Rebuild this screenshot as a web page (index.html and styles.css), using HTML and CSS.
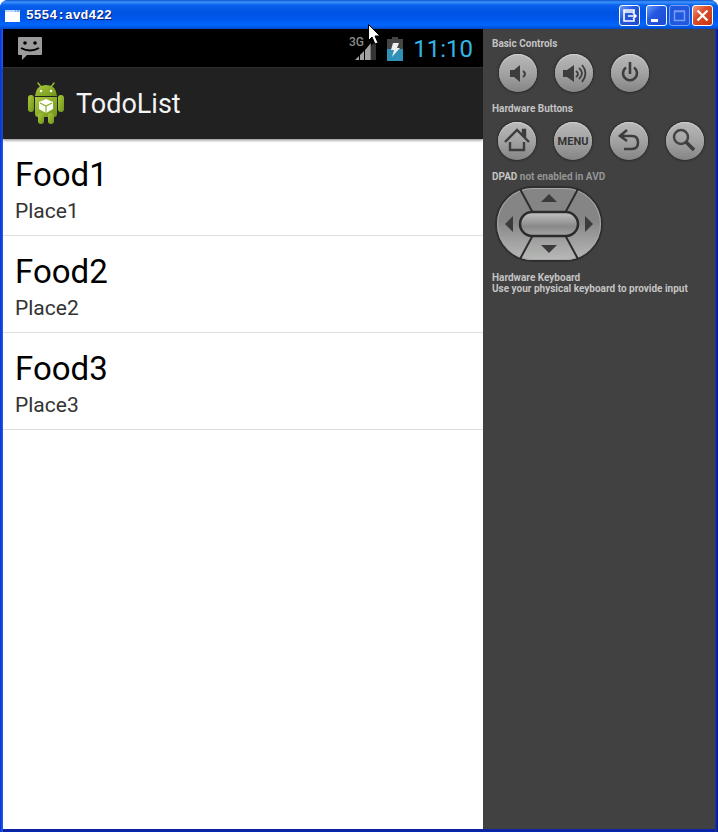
FILE: index.html
```html
<!DOCTYPE html>
<html lang="en">
<head>
<meta charset="utf-8">
<title>5554:avd422</title>
<link rel="stylesheet" href="styles.css">
</head>
<body>
<div class="window">
  <header class="titlebar">
    <svg class="app-icon" width="15" height="12" viewBox="0 0 15 12" aria-hidden="true"><path d="M0 0h15v12H0z" fill="#fff"/><path d="M0 0h15v2H0z" fill="#b9d9fb"/><path d="M10 1h1M12 1h2" stroke="#357be8"/></svg>
    <h1 class="window-title">5554:avd422</h1>
    <div class="window-buttons">
      <button class="win-btn detach" aria-label="Detach"><svg width="19" height="19" viewBox="0 0 19 19"><path d="M14 7V4H4v11h10v-2M4 6h10M8 10h8M13 7l3 3-3 3" fill="none" stroke="#fff" stroke-width="1.6"/></svg></button>
      <button class="win-btn" aria-label="Minimize"><svg width="19" height="19" viewBox="0 0 19 19"><path d="M4 13h7v3H4z" fill="#fff"/></svg></button>
      <button class="win-btn disabled" aria-label="Maximize" disabled><svg width="19" height="19" viewBox="0 0 19 19"><path d="M4.500 5.500h10v9h-10zM4 5h11" fill="none" stroke="#7a9af5" stroke-width="1.500"/></svg></button>
      <button class="win-btn close" aria-label="Close"><svg width="19" height="19" viewBox="0 0 19 19"><path d="M4.500 4.500l10 10M14.500 4.500l-10 10" stroke="#fff" stroke-width="2.300"/></svg></button>
    </div>
  </header>
  <div class="content">
    <main class="phone">
      <div class="statusbar">
        <svg width="24" height="23" viewBox="0 0 24 23" aria-label="Message" role="img"><path d="M1 0h22q1 0 1 1v16q0 1-1 1H9l-5 5v-5H1q-1 0-1-1V1q0-1 1-1z" fill="#9b9b9b"/><circle cx="7" cy="6" r="1.800"/><circle cx="17" cy="6" r="1.800"/><path d="M3 11q9 5 18 0" fill="none" stroke="#000" stroke-width="2"/></svg>
        <div class="status-right">
          <svg width="28" height="25" viewBox="0 0 28 25" aria-label="Signal" role="img"><text class="network" x="0" y="10">3G</text><path d="M27 5v19h-5V10z" fill="#333"/><path d="M6 24l4-4v4zM11 24v-5l4-4v9zM16 24V14l1-1 4-5v16z" fill="#a2a2a2"/><path d="M21 8l1-1v17h-1z" fill="#777"/></svg>
          <svg width="16" height="24" viewBox="0 0 16 24" aria-label="Charging" role="img"><path d="M5 0h6v2h5v22H0V2h5z" fill="#454545"/><path d="M0 12h16v12H0z" fill="#2f91b8"/><path d="M6 6h6l-2 5h3l-8 9 2-7H4z" fill="#eee"/></svg>
          <time class="clock">11:10</time>
        </div>
      </div>
      <div class="actionbar">
        <svg width="36" height="43" viewBox="0 0 36 43" aria-hidden="true">
          <defs><linearGradient id="droid" x1="0" y1="0" x2="1" y2="1"><stop offset="0" stop-color="#abc93e"/><stop offset="1" stop-color="#71931a"/></linearGradient></defs>
          <path d="M13 5l-3-4M23 5l3-4" stroke="#96b832" stroke-width="1.500" stroke-linecap="round"/>
          <g fill="url(#droid)"><path d="M7 14Q8 3 18 3t11 11z"/><path d="M7 15h22v17q0 3-3 3H10q-3 0-3-3z"/><rect x="0" y="13" width="6" height="17" rx="3"/><rect x="30" y="13" width="6" height="17" rx="3"/><rect x="10" y="31" width="6" height="11" rx="3"/><rect x="20" y="31" width="6" height="11" rx="3"/></g>
          <circle cx="13" cy="9" r="1.200" fill="#fff"/><circle cx="23" cy="9" r="1.200" fill="#fff"/>
          <path d="M18 17l7 3v7l-7 4-7-4v-7z" fill="#fff"/><path d="M12 21l6 3 6-3M18 24v7" fill="none" stroke="#8daf2a" stroke-width="1.200"/>
        </svg>
        <h2 class="app-title">TodoList</h2>
      </div>
      <ul class="list">
        <li class="item"><span class="food">Food1</span><span class="place">Place1</span></li>
        <li class="item"><span class="food">Food2</span><span class="place">Place2</span></li>
        <li class="item"><span class="food">Food3</span><span class="place">Place3</span></li>
      </ul>
    </main>
    <aside class="controls">
      <h3 class="label">Basic Controls</h3>
      <div class="keys basic">
        <button class="key" aria-label="Volume down"><svg width="38" height="38" viewBox="0 0 38 38"><path d="M11 16h4l6-5v17l-6-5h-4z" fill="#3d3d3d"/><path d="M24 17q4 3 0 6" fill="none" stroke="#3d3d3d" stroke-width="2"/></svg></button>
        <button class="key" aria-label="Volume up"><svg width="38" height="38" viewBox="0 0 38 38"><path d="M8 16h4l7-5v17l-7-5H8z" fill="#3d3d3d"/><path d="M21 17q4 3 0 6M24 14q6 5 0 11M27 11q7 8 0 17" fill="none" stroke="#3d3d3d" stroke-width="1.800"/></svg></button>
        <button class="key" aria-label="Power"><svg width="38" height="38" viewBox="0 0 38 38"><path d="M15 13.500a7 7 0 1 0 8 0M19 8v12" fill="none" stroke="#3d3d3d" stroke-width="2.600"/></svg></button>
      </div>
      <h3 class="label">Hardware Buttons</h3>
      <div class="keys hardware">
        <button class="key" aria-label="Home"><svg width="38" height="38" viewBox="0 0 38 38"><path d="M7 20L19 8l12 12M25 13V8h2v7M12 20v8h14v-8" fill="none" stroke="#3d3d3d" stroke-width="2.400"/></svg></button>
        <button class="key">MENU</button>
        <button class="key" aria-label="Back"><svg width="38" height="38" viewBox="0 0 38 38"><path d="M17 8l-7 6 7 5M10 14h12q6 0 6 6.500T22 27h-8" fill="none" stroke="#3d3d3d" stroke-width="2.600"/></svg></button>
        <button class="key" aria-label="Search"><svg width="38" height="38" viewBox="0 0 38 38"><circle cx="15" cy="15" r="7" fill="none" stroke="#444" stroke-width="2.500"/><path d="M20 20l8 8" stroke="#3d3d3d" stroke-width="3.500"/></svg></button>
      </div>
      <h3 class="label">DPAD <span class="muted">not enabled in AVD</span></h3>
      <svg class="dpad" width="108" height="76" viewBox="0 0 108 76" role="img" aria-label="Directional pad">
        <defs><linearGradient id="pad" x1="0" y1="0" x2="0" y2="1"><stop offset="0" stop-color="#858585"/><stop offset="0.450" stop-color="#858585"/><stop offset="1" stop-color="#b9bbb9"/></linearGradient><linearGradient id="ok" x1="0" y1="0" x2="0" y2="1"><stop offset="0" stop-color="#c4c4c4"/><stop offset="0.600" stop-color="#898989"/><stop offset="1" stop-color="#a5a5a5"/></linearGradient></defs>
        <rect x="1" y="1" width="106" height="74" rx="37" fill="url(#pad)" stroke="#2f2f2f" stroke-width="2"/>
        <rect x="2.500" y="2.500" width="103" height="71" rx="35.500" fill="none" stroke="#a8a8a8"/>
        <path d="M25 3l13 24M83 3L70 27M38 49L25 73M70 49l13 24" stroke="#2d2d2d" stroke-width="2"/>
        <rect x="25" y="26" width="58" height="24" rx="12" fill="url(#ok)" stroke="#2b2b2b" stroke-width="2.500"/>
        <path d="M46 16l8-8 8 8zM46 59h16l-8 8zM18 30v16l-8-8zM90 30v16l8-8z" fill="#3b3b3b"/>
      </svg>
      <h3 class="label">Hardware Keyboard</h3>
      <p class="label">Use your physical keyboard to provide input</p>
    </aside>
  </div>
  <svg class="cursor" width="13" height="21" viewBox="0 0 13 21" aria-hidden="true"><path d="M.5.5v16l3.500-3.500 3 7 3-1.200-3-6.800h5z" fill="#fff" stroke="#000"/></svg>
</div>
</body>
</html>
```
FILE: styles.css
```css
* { box-sizing: border-box; }
body { margin: 0; background: #fff; font-family: Roboto, sans-serif; }
h1, h2, h3, p, ul { margin: 0; padding: 0; }
button { padding: 0; border: 0; font-family: inherit; }
svg { display: block; flex: none; }

.window {
  position: relative;
  display: flex;
  flex-direction: column;
  min-height: 100vh;
  overflow: hidden;
  border-radius: 8px 8px 0 0;
  background: linear-gradient(90deg, #0831d9 0, #2260ee 3px, #1c3c9c calc(100% - 3px), #00129a 100%);
}
.titlebar {
  display: flex;
  align-items: center;
  height: 29px;
  padding: 2px 5px 0;
  background: linear-gradient(#0a50c8 0, #3d95ff 2px, #0a62ee 5px, #0054e3 12px, #0058ec 19px, #0066ff 25px, #0049c8 29px);
}
.window-title {
  margin-left: 6px;
  color: #fff;
  font: bold 13px/18px "Liberation Mono", monospace;
  text-shadow: 1px 1px #0a1e78;
}
.window-buttons { display: flex; gap: 2px; margin-left: auto; }
.win-btn {
  display: grid;
  place-items: center;
  width: 21px;
  height: 21px;
  border: 1px solid #fff;
  border-radius: 3px;
  background: linear-gradient(135deg, #6b9afc, #2559df 40%, #1c49d0);
}
.detach { margin-right: 4px; }
.disabled { border-color: #7c9cf0; background: #2058df; }
.close { background: linear-gradient(135deg, #f09a80, #dd4c28 40%, #c43610); }

.content {
  display: flex;
  flex: 1;
  margin: 0 3px;
  border-bottom: 3px solid #0a24a8;
}
.phone { flex: 1; background: #fff; }
.statusbar {
  display: flex;
  align-items: center;
  justify-content: space-between;
  height: 38px;
  padding: 1px 10px 0 15px;
  background: #000;
}
.status-right { display: flex; align-items: center; gap: 10px; }
.network { fill: #8c8c8c; font: 500 12px Roboto, sans-serif; }
.clock { color: #33b5e5; font-size: 24px; line-height: 28px; }
.actionbar {
  display: flex;
  align-items: center;
  gap: 12px;
  height: 72px;
  padding-left: 25px;
  border-top: 1px solid #303030;
  background: #212121;
  box-shadow: 0 1px 3px #0008;
}
.app-title { color: #f3f3f3; font-size: 27px; font-weight: 400; line-height: 32px; }
.list { list-style: none; }
.item {
  display: flex;
  flex-direction: column;
  gap: 5px;
  padding: 16px 12px 11px;
  border-bottom: 1px solid #dedede;
}
.food { font-size: 33px; line-height: 39px; color: #000; }
.place { font-size: 21px; line-height: 25px; color: #333; }

.controls { width: 232px; padding: 9px; background: #414141; }
.label { color: #c4c4c4; font-size: 10px; font-weight: 700; line-height: 11px; }
.muted { color: #959595; }
.keys { display: flex; gap: 18px; }
.basic { margin: 5px 0 11px; padding-left: 7px; }
.hardware { margin: 8px 0 11px; padding-left: 6px; }
.key {
  display: grid;
  place-items: center;
  width: 38px;
  height: 38px;
  border-radius: 50%;
  background: linear-gradient(#b8b8b8, #a3a3a3 50%, #858585);
  box-shadow: inset 0 1px 1px #d0d0d0, 0 0 2px 1px #2b2b2b;
  color: #333;
  font-size: 11px;
  font-weight: 700;
}
.dpad { margin: 4px 0 10px 3px; }
.cursor { position: absolute; top: 24px; left: 368px; }
```
